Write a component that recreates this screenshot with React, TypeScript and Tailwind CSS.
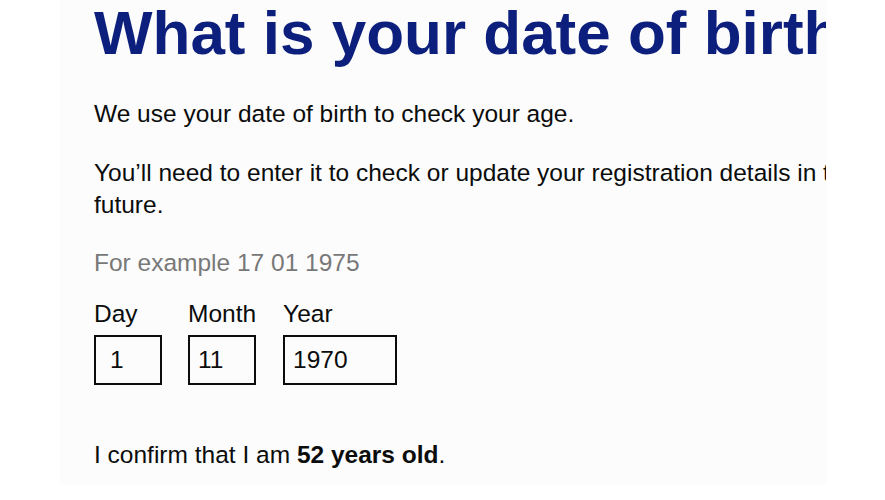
import React from "react";

export default function App() {
  return (
    <div className="w-[885px] h-[500px] bg-white overflow-hidden" style={{ fontFamily: '"Liberation Sans", Arial, sans-serif' }}>
      <div className="ml-[60px] w-[766px] h-[485px] bg-[#fcfcfc] overflow-hidden">
        <div className="pl-[34px] w-[900px] text-[#0b0c0c]">
          <h1 className="pt-[2px] text-[62px] leading-[62px] font-bold text-[#0c1f7c] whitespace-nowrap">
            What is your date of birth?
          </h1>
          <p className="mt-[34px] text-[24.5px] leading-[32px]">We use your date of birth to check your age.</p>
          <p className="mt-[27px] w-[800px] text-[24.5px] leading-[32px]">
            You’ll need to enter it to check or update your registration details in the future.
          </p>
          <p className="mt-[26px] text-[24.5px] leading-[32px] text-[#787878]">For example 17 01 1975</p>
          <div className="mt-[19px] flex">
            <div className="flex flex-col">
              <label className="text-[24.5px] leading-[32px]">Day</label>
              <div className="mt-[5px] w-[68px] h-[50px] border-2 border-[#0b0c0c] pl-[14px] text-[24.5px] leading-[46px]">1</div>
            </div>
            <div className="flex flex-col ml-[26px]">
              <label className="text-[24.5px] leading-[32px]">Month</label>
              <div className="mt-[5px] w-[68px] h-[50px] border-2 border-[#0b0c0c] pl-[8px] text-[24.5px] leading-[46px]">11</div>
            </div>
            <div className="flex flex-col ml-[27px]">
              <label className="text-[24.5px] leading-[32px]">Year</label>
              <div className="mt-[5px] w-[114px] h-[50px] border-2 border-[#0b0c0c] pl-[8px] text-[24.5px] leading-[46px]">1970</div>
            </div>
          </div>
          <p className="mt-[54px] text-[24.5px] leading-[32px]">
            I confirm that I am <span className="font-bold">52 years old</span>.
          </p>
        </div>
      </div>
    </div>
  );
}
